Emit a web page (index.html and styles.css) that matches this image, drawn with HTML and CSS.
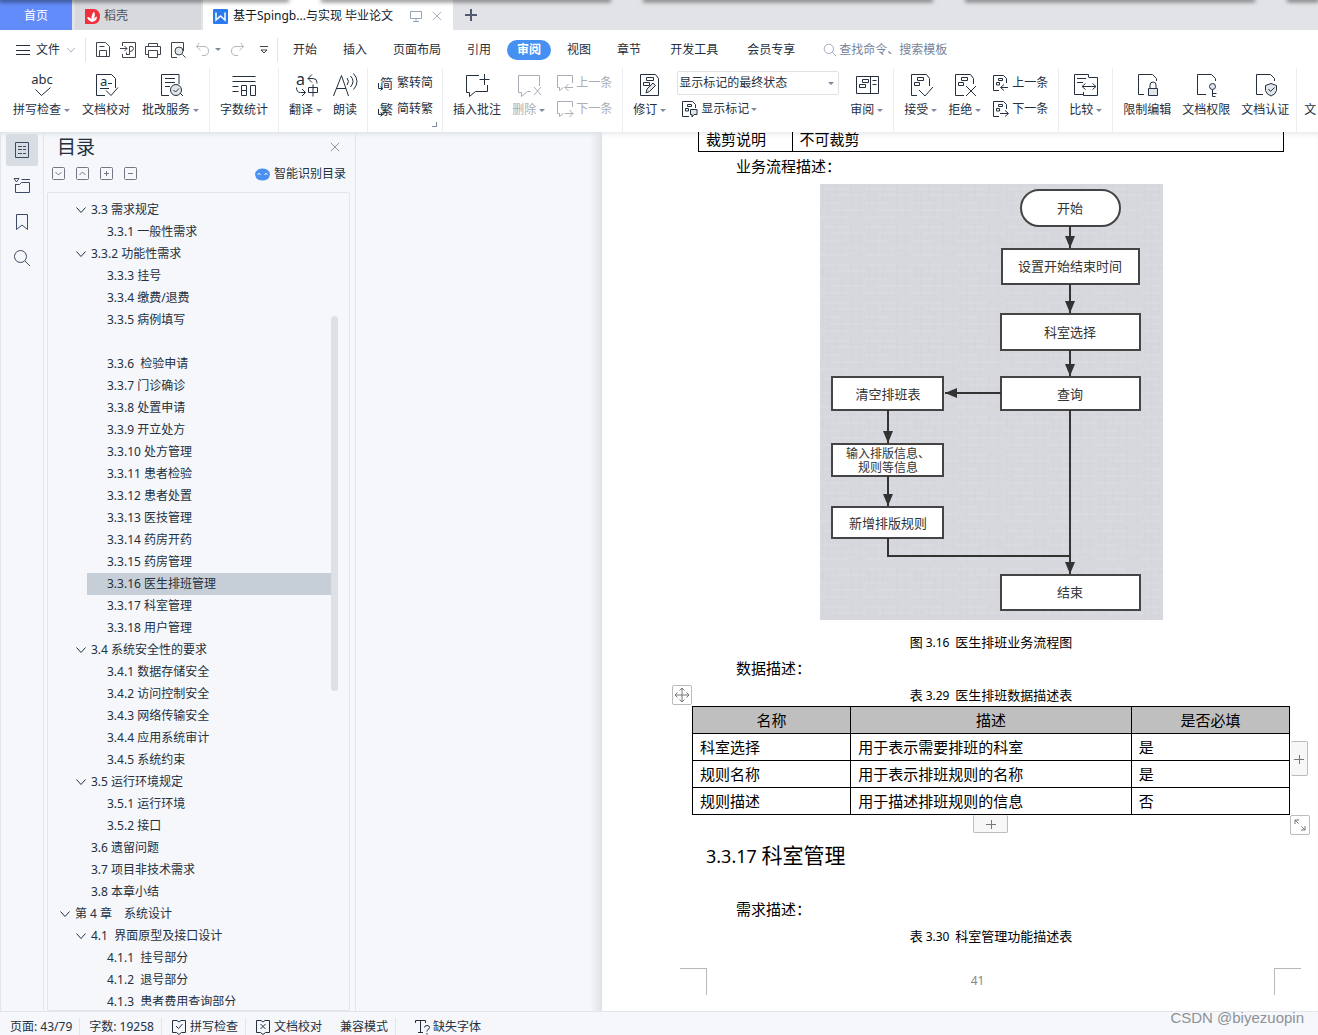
FILE: index.html
```html
<!DOCTYPE html>
<html lang="zh-CN">
<head>
<meta charset="utf-8">
<meta name="viewport" content="width=device-width, initial-scale=1">
<title>WPS 文字</title>
<link rel="stylesheet" href="styles.css">
</head>
<body>
<svg class="sprite" aria-hidden="true">
  <symbol id="chev" viewBox="0 0 12 12"><path d="M1.500 3.500L6 8.500l4.500-5"/></symbol>
  <symbol id="cross" viewBox="0 0 12 12"><path d="M1 1l10 10M11 1L1 11"/></symbol>
  <symbol id="review" viewBox="0 0 26 26"><path d="M11 23.500H3.500v-21h17.500V12M7 6.500h10M7 10.500h10M7 14.500h5M22 21l3 3"/><circle cx="18" cy="18" r="5.500" class="soft"/><path d="M15.500 18l2 2 3.500-3.500"/></symbol>
  <symbol id="count" viewBox="0 0 26 26"><path d="M1.500 4.500h23M1.500 9.500h23M1.500 14.500h6M1.500 19.500h6M10.500 13.500h5v10h-5zM10.500 18.500h5M19.500 13.500h5v10h-5z"/></symbol>
  <symbol id="read" viewBox="0 0 26 26"><path d="M1.500 24L9.500 3.500 16.500 24M4 16.500h10M15 6q3 3 0 7M18.500 4q5 5 0 11M21.500 1.500q7 8 0 16"/></symbol>
  <symbol id="comment" viewBox="0 0 26 26"><path d="M15 3.500H2.500v17h3v4l6-5h12V13M15.500 7.500h10M20.500 2v11"/></symbol>
  <symbol id="delcomment" viewBox="0 0 26 26"><path d="M23.500 14V3.500H2.500v17h3v4l6-5h3M18 15l7 8M25 15l-7 8"/></symbol>
  <symbol id="prevc" viewBox="0 0 18 18"><path d="M16.500 9V1.500H1.500v12h2v3l4-3M9 13.500h8M12.500 10L9 13.500l3.500 3.500"/></symbol>
  <symbol id="nextc" viewBox="0 0 18 18"><path d="M16.500 7V1.500H1.500v12h2v3l4-3M9 13.500h8M13.500 10l3.500 3.500-3.500 3.500"/></symbol>
  <symbol id="revise" viewBox="0 0 26 26"><path d="M3.500 2.500h15l3 4v17h-18zM9.500 5.500h7v3h-7zM6.500 10.500h6v3h-6z"/><path class="soft" d="M9 21l1-4 6-6 2.500 2.500-6 6z"/></symbol>
  <symbol id="pane" viewBox="0 0 26 26"><path d="M2.500 4.500h22v17h-22zM16.500 4.500v17M8.500 7.500h6v3h-6zM5.500 12.500h6v3h-6zM18.500 8.500h4M18.500 12.500h4"/></symbol>
  <symbol id="accept" viewBox="0 0 26 26"><path d="M9 23.500H3.500v-21h15l3 4V14M9.500 5.500h6v3h-6zM6.500 10.500h5v3h-5zM11 18l6 6 8-9"/></symbol>
  <symbol id="reject" viewBox="0 0 26 26"><path d="M12 23.500H3.500v-21h15l3 4V12M9.500 5.500h6v3h-6zM6.500 10.500h5v3h-5zM14 14l10 10M24 14L14 24"/></symbol>
  <symbol id="prevd" viewBox="0 0 18 18"><path d="M7 16.500H1.500v-15h10l3 3V9M6.500 4.500h4v2h-4zM4.500 8.500h3v2.500h-3zM9 13.500h7M12 10.500l-3.500 3 3.500 3"/></symbol>
  <symbol id="nextd" viewBox="0 0 18 18"><path d="M7 16.500H1.500v-15h10l3 3V9M6.500 4.500h4v2h-4zM4.500 8.500h3v2.500h-3zM8 13.500h8M13 10.500l3.500 3-3.500 3"/></symbol>
  <symbol id="mark" viewBox="0 0 18 18"><path d="M8 16.500H1.500v-15h10l3 3V8M6.500 4.500h4v2h-4zM4.500 8.500h3v2.500h-3z"/><path class="soft" d="M9.500 9.500h6.500v5h-3l-2 2.500v-2.500h-1.500z"/></symbol>
  <symbol id="compare" viewBox="0 0 26 26"><path d="M15.500 5V2.500H1.500v20h9M4 6.500h9M4 10.500h6M15.500 5.500h9v18h-14V20M9.500 14.500h13M12.500 11.500l-3.500 3 3.500 3M19.500 11.500l3.500 3-3.500 3"/></symbol>
  <symbol id="lock" viewBox="0 0 26 26"><path d="M10 22.500H4.500v-20h14l4 4V9"/><path d="M16 16v-3q0-3 3-3t3 3v3"/><path class="soft" d="M14.500 16.500h9v7h-9z"/></symbol>
  <symbol id="key" viewBox="0 0 26 26"><path d="M13 22.500H4.500v-20h14l4 4V9M19.500 17.500v7M19.500 21.500h4M19.500 24.500h3"/><circle class="soft" cx="19.500" cy="14.500" r="3"/></symbol>
  <symbol id="shield" viewBox="0 0 26 26"><path d="M11 22.500H4.500v-20h14l4 4V9"/><path class="soft" d="M19 11.500l5.500 2v5q-1 4-5.500 5.500-4.500-1.500-5.500-5.500v-5z"/><path d="M16.500 17l2 2.500 4-4"/></symbol>
  <symbol id="search" viewBox="0 0 18 18"><circle cx="7.500" cy="7.500" r="6"/><path d="M12 12l5 5"/></symbol>
  <symbol id="save" viewBox="0 0 18 18"><path d="M2.500 1.500h9l4 4v10h-13zM5.500 5.500h5M5.500 15.500v-6h7v6"/></symbol>
  <symbol id="pdf" viewBox="0 0 18 18"><path d="M3.500 5V1.500h13v15h-13V13M1 7.500h7M5.500 5L8 7.500 5.500 10M7.500 14V11.500M10.500 5.500q4-1 4 2t-4 3v3H8M10.500 5.500v5"/></symbol>
  <symbol id="print" viewBox="0 0 18 18"><path d="M4.500 5V2.500h9V5M4.500 13.500h-3v-8h15v8h-3M4.500 9.500h9v7h-9z"/></symbol>
  <symbol id="preview" viewBox="0 0 18 18"><path d="M8 16.500H2.500v-15h12V10M13.500 13.500l3 3"/><circle class="soft" cx="10" cy="10" r="4"/></symbol>
  <symbol id="undo" viewBox="0 0 18 18"><path d="M5.500 2L2.500 5.500l4 4M2.500 5.500H10q4.500 0 4.500 4.500T10 14.500H8"/></symbol>
  <symbol id="redo" viewBox="0 0 18 18"><path d="M12.500 2l3 3.500-4 4M15.500 5.500H8Q3.500 5.500 3.500 10T8 14.500h2"/></symbol>
</svg>

<header class="tabs">
  <div class="edge" aria-hidden="true"><i></i><i></i><i></i><i></i><i></i></div>
  <button class="tab home">首页</button>
  <button class="tab docer"><svg class="i15" viewBox="0 0 15 15"><path stroke="none" fill="#f0303c" d="M0 0h9q6 1 6 7.500T9 15H0z"/><path fill="#fff" stroke="none" d="M7 13Q3 12 2 8q3 0 4.500 2Q6 6 9 2.500 11 6 8.500 10q1-2 3.500-2.500Q12 12 7 13z"/></svg>稻壳</button>
  <button class="tab current"><svg class="i15" viewBox="0 0 15 15"><rect width="15" height="15" rx="1" fill="#2b7bf0" stroke="none"/><path stroke="#fff" stroke-width="1.500" d="M3 3.500v7.500l4.500-4 4.500 4V3.500"/></svg><span class="tabname">基于Spingb...与实现 毕业论文</span><svg class="i12 pale" viewBox="0 0 12 12"><path d="M.5 1.500h11v7H.5zM6 8.500v3M3 11.500h6"/></svg><svg class="i10 pale"><use href="#cross"/></svg></button>
  <button class="newtab" aria-label="新建"><svg class="i12" viewBox="0 0 12 12"><path stroke-width="2" d="M6 0v12M0 6h12"/></svg></button>
</header>

<nav class="menu">
  <button class="file"><svg class="i14" viewBox="0 0 14 14"><path d="M0 2.500h14M0 7.500h14M0 11.500h14"/></svg>文件<svg class="i10 pale"><use href="#chev"/></svg></button>
  <div class="quick">
    <button aria-label="保存"><svg class="i18"><use href="#save"/></svg></button>
    <button aria-label="输出PDF"><svg class="i18"><use href="#pdf"/></svg></button>
    <button aria-label="打印"><svg class="i18"><use href="#print"/></svg></button>
    <button aria-label="打印预览"><svg class="i18"><use href="#preview"/></svg></button>
    <button class="off" aria-label="撤销"><svg class="i18"><use href="#undo"/></svg><i class="caret"></i></button>
    <button class="off" aria-label="恢复"><svg class="i18"><use href="#redo"/></svg></button>
    <button class="more" aria-label="更多"><svg class="i10" viewBox="0 0 10 10"><path d="M1 1.500h8M2 5l3 3 3-3z"/></svg></button>
  </div>
  <div class="pages">
    <button>开始</button><button>插入</button><button>页面布局</button><button>引用</button><button class="on">审阅</button><button>视图</button><button>章节</button><button class="wide">开发工具</button><button class="wide">会员专享</button>
  </div>
  <label class="find"><svg class="i14" viewBox="0 0 18 18"><use href="#search"/></svg><input type="text" aria-label="搜索" placeholder="查找命令、搜索模板"></label>
</nav>

<section class="ribbon">
  <div class="group">
    <button class="big"><svg class="i28" viewBox="0 0 28 26"><text x="14" y="12" text-anchor="middle" class="glyph">abc</text><path d="M7.500 17.500l6 6 9-8"/></svg><span class="cap">拼写检查<i class="caret"></i></span></button>
    <button class="big"><svg class="i26" viewBox="0 0 26 26"><path d="M12 23.500H3.500v-21h15l4 4V16M13 18.500l5 5 7-8M7 16.500h9M15 11.500h4"/><text x="7" y="14" class="glyph">a</text></svg><span class="cap">文档校对</span></button>
    <button class="big"><svg class="i26"><use href="#review"/></svg><span class="cap">批改服务<i class="caret"></i></span></button>
  </div>
  <div class="group">
    <button class="big"><svg class="i26"><use href="#count"/></svg><span class="cap">字数统计</span></button>
  </div>
  <div class="group">
    <button class="big"><svg class="i26" viewBox="0 0 26 26"><text x="3" y="13" class="glyph large">a</text><path d="M19 2.500l-4 4 4 4M15 6.500h5q4 0 4 4v1M3.500 15.500q0 5 4 5h5M9 17l3.500 3.500L9 24M15.500 15.500h9v5h-9zM20 12.500v12"/></svg><span class="cap">翻译<i class="caret"></i></span></button>
    <button class="big"><svg class="i26"><use href="#read"/></svg><span class="cap">朗读</span></button>
  </div>
  <div class="group corner">
    <div class="stack">
      <button class="small"><svg class="i18" viewBox="0 0 18 18"><text x="3" y="14" class="glyph">简</text><path d="M1.500 9v5.500h4M3.500 12.500l2 2-2 2"/></svg>繁转简</button>
      <button class="small"><svg class="i18" viewBox="0 0 18 18"><text x="3" y="14" class="glyph">繁</text><path d="M1.500 9v5.500h4M3.500 12.500l2 2-2 2"/></svg>简转繁</button>
    </div>
  </div>
  <div class="group">
    <button class="big"><svg class="i26"><use href="#comment"/></svg><span class="cap">插入批注</span></button>
    <button class="big off"><svg class="i26"><use href="#delcomment"/></svg><span class="cap">删除<i class="caret"></i></span></button>
    <div class="stack">
      <button class="small off"><svg class="i18"><use href="#prevc"/></svg>上一条</button>
      <button class="small off"><svg class="i18"><use href="#nextc"/></svg>下一条</button>
    </div>
  </div>
  <div class="group">
    <button class="big"><svg class="i26"><use href="#revise"/></svg><span class="cap">修订<i class="caret"></i></span></button>
    <div class="stack">
      <div class="pick"><select aria-label="显示状态"><option>显示标记的最终状态</option></select><i class="caret"></i></div>
      <button class="small marks"><svg class="i18"><use href="#mark"/></svg>显示标记<i class="caret"></i></button>
    </div>
    <button class="big"><svg class="i26"><use href="#pane"/></svg><span class="cap">审阅<i class="caret"></i></span></button>
  </div>
  <div class="group">
    <button class="big"><svg class="i26"><use href="#accept"/></svg><span class="cap">接受<i class="caret"></i></span></button>
    <button class="big"><svg class="i26"><use href="#reject"/></svg><span class="cap">拒绝<i class="caret"></i></span></button>
    <div class="stack">
      <button class="small"><svg class="i18"><use href="#prevd"/></svg>上一条</button>
      <button class="small"><svg class="i18"><use href="#nextd"/></svg>下一条</button>
    </div>
  </div>
  <div class="group">
    <button class="big"><svg class="i26"><use href="#compare"/></svg><span class="cap">比较<i class="caret"></i></span></button>
  </div>
  <div class="group last">
    <button class="big"><svg class="i26"><use href="#lock"/></svg><span class="cap">限制编辑</span></button>
    <button class="big"><svg class="i26"><use href="#key"/></svg><span class="cap">文档权限</span></button>
    <button class="big"><svg class="i26"><use href="#shield"/></svg><span class="cap">文档认证</span></button>
  </div>
  <button class="big clipped"><span class="cap">文</span></button>
</section>

<div class="work">
  <aside class="rail">
    <button class="on" aria-label="目录"><svg class="i18" viewBox="0 0 18 18"><path d="M2.500 1.500h13v15h-13zM5 5.500h4M5 8.500h4M5 12.500h4M10 5.500h3M10 8.500h3M10 12.500h3"/></svg></button>
    <button aria-label="章节"><svg class="i18" viewBox="0 0 18 18"><path d="M1 1.500h5L3.500 5zM8.500 2.500H17M2.500 7v8.500h14v-10h-8l-2 2h-4"/></svg></button>
    <button aria-label="书签"><svg class="i18" viewBox="0 0 18 18"><path d="M3.500 1.500h11v15L9 12l-5.500 4.500z"/></svg></button>
    <button aria-label="查找"><svg class="i18"><use href="#search"/></svg></button>
  </aside>
  <aside class="panel">
    <div class="head"><h1>目录</h1><button aria-label="关闭"><svg class="i10"><use href="#cross"/></svg></button></div>
    <div class="tools">
      <button class="box" aria-label="展开"><svg class="i14" viewBox="0 0 14 14"><rect x=".5" y=".5" width="12" height="12" rx="1"/><path d="M3.500 5l3 3 3-3"/></svg></button>
      <button class="box" aria-label="收起"><svg class="i14" viewBox="0 0 14 14"><rect x=".5" y=".5" width="12" height="12" rx="1"/><path d="M3.500 8l3-3 3 3"/></svg></button>
      <button class="box" aria-label="增加级别"><svg class="i14" viewBox="0 0 14 14"><rect x=".5" y=".5" width="12" height="12" rx="1"/><path d="M4 6.500h5M6.500 4v5"/></svg></button>
      <button class="box" aria-label="减少级别"><svg class="i14" viewBox="0 0 14 14"><rect x=".5" y=".5" width="12" height="12" rx="1"/><path d="M4 6.500h5"/></svg></button>
      <button class="smart"><svg class="i15" viewBox="0 0 15 15"><path fill="#4a90f0" stroke="none" d="M3 2.500q4.500-2 9 0 2.500 1.500 3 5-.5 3.500-3 5-4.500 2-9 0-2.500-1.500-3-5 .5-3.500 3-5z"/><path stroke="#fff" d="M2.500 7.500q1.500-2 3 0M9.500 7.500q1.500-2 3 0"/></svg>智能识别目录</button>
    </div>
    <div class="tree">
      <ul>
        <li><a class="l2 open" href="#"><svg class="i12"><use href="#chev"/></svg>3.3 需求规定</a></li>
        <li><a class="l3" href="#">3.3.1 一般性需求</a></li>
        <li><a class="l2 open" href="#"><svg class="i12"><use href="#chev"/></svg>3.3.2 功能性需求</a></li>
        <li><a class="l3" href="#">3.3.3 挂号</a></li>
        <li><a class="l3" href="#">3.3.4 缴费/退费</a></li>
        <li><a class="l3" href="#">3.3.5 病例填写</a></li>
        <li class="blank"></li>
        <li><a class="l3" href="#">3.3.6&nbsp; 检验申请</a></li>
        <li><a class="l3" href="#">3.3.7 门诊确诊</a></li>
        <li><a class="l3" href="#">3.3.8 处置申请</a></li>
        <li><a class="l3" href="#">3.3.9 开立处方</a></li>
        <li><a class="l3" href="#">3.3.10 处方管理</a></li>
        <li><a class="l3" href="#">3.3.11 患者检验</a></li>
        <li><a class="l3" href="#">3.3.12 患者处置</a></li>
        <li><a class="l3" href="#">3.3.13 医技管理</a></li>
        <li><a class="l3" href="#">3.3.14 药房开药</a></li>
        <li><a class="l3" href="#">3.3.15 药房管理</a></li>
        <li><a class="l3 sel" href="#">3.3.16 医生排班管理</a></li>
        <li><a class="l3" href="#">3.3.17 科室管理</a></li>
        <li><a class="l3" href="#">3.3.18 用户管理</a></li>
        <li><a class="l2 open" href="#"><svg class="i12"><use href="#chev"/></svg>3.4 系统安全性的要求</a></li>
        <li><a class="l3" href="#">3.4.1 数据存储安全</a></li>
        <li><a class="l3" href="#">3.4.2 访问控制安全</a></li>
        <li><a class="l3" href="#">3.4.3 网络传输安全</a></li>
        <li><a class="l3" href="#">3.4.4 应用系统审计</a></li>
        <li><a class="l3" href="#">3.4.5 系统约束</a></li>
        <li><a class="l2 open" href="#"><svg class="i12"><use href="#chev"/></svg>3.5 运行环境规定</a></li>
        <li><a class="l3" href="#">3.5.1 运行环境</a></li>
        <li><a class="l3" href="#">3.5.2 接口</a></li>
        <li><a class="l2" href="#">3.6 遗留问题</a></li>
        <li><a class="l2" href="#">3.7 项目非技术需求</a></li>
        <li><a class="l2" href="#">3.8 本章小结</a></li>
        <li><a class="l1 open" href="#"><svg class="i12"><use href="#chev"/></svg>第 4 章　系统设计</a></li>
        <li><a class="l2 open" href="#"><svg class="i12"><use href="#chev"/></svg>4.1&nbsp; 界面原型及接口设计</a></li>
        <li><a class="l3" href="#">4.1.1&nbsp; 挂号部分</a></li>
        <li><a class="l3" href="#">4.1.2&nbsp; 退号部分</a></li>
        <li><a class="l3" href="#">4.1.3&nbsp; 患者费用查询部分</a></li>
      </ul>
      <i class="thumb"></i>
    </div>
  </aside>
  <div class="desk"></div>
  <main class="paper">
    <table class="grid cut"><tbody><tr><td>裁剪说明</td><td>不可裁剪</td></tr></tbody></table>
    <p class="lead first">业务流程描述：</p>
    <figure>
      <svg class="flow" viewBox="0 0 343 436" role="img" aria-label="医生排班业务流程图">
        <defs>
          <pattern id="weave" width="46" height="38" patternUnits="userSpaceOnUse">
            <path d="M3 0v24M9 8v30M17 0v16M22 12v26M31 0v30M40 6v30" stroke="#cfd0d5" stroke-width="1" opacity=".5"/>
            <path d="M0 5h30M12 11h34M0 19h22M8 26h38M0 33h28" stroke="#e0e1e5" stroke-width="1" opacity=".5"/>
          </pattern>
          <marker id="tip" markerUnits="userSpaceOnUse" markerWidth="14" markerHeight="12" refX="12" refY="5" orient="auto"><path d="M0 0L12 5 0 10z" fill="#333" stroke="none"/></marker>
        </defs>
        <rect width="343" height="436" fill="#d7d8dd" stroke="none"/>
        <rect width="343" height="436" fill="url(#weave)" stroke="none"/>
        <g class="shape">
          <rect x="201" y="6" width="99" height="36" rx="18"/>
          <rect x="182" y="65" width="137" height="35"/>
          <rect x="181" y="130" width="139" height="36"/>
          <rect x="181" y="193" width="139" height="33"/>
          <rect x="12" y="193" width="111" height="33"/>
          <rect x="12" y="260" width="111" height="32"/>
          <rect x="12" y="323" width="111" height="31"/>
          <rect x="181" y="391" width="139" height="35"/>
        </g>
        <g class="wire">
          <path d="M250 42v22"/><path d="M250 100v29"/><path d="M250 166v26"/><path d="M250 226v164"/>
          <path d="M181 209h-56"/><path d="M68 226v33"/><path d="M68 292v30"/>
        </g>
        <path class="join" d="M68 354v18h182"/>
        <g class="words">
          <text x="250" y="29">开始</text>
          <text x="250" y="87">设置开始结束时间</text>
          <text x="250" y="153">科室选择</text>
          <text x="250" y="215">查询</text>
          <text x="68" y="215">清空排班表</text>
          <text x="68" y="274" class="tight">输入排版信息、</text>
          <text x="68" y="288" class="tight">规则等信息</text>
          <text x="68" y="344">新增排版规则</text>
          <text x="250" y="413">结束</text>
        </g>
      </svg>
      <figcaption>图 <span>3.16</span>&nbsp; 医生排班业务流程图</figcaption>
    </figure>
    <p class="lead">数据描述：</p>
    <div class="tablebox">
      <table class="grid data">
        <caption>表 <span>3.29</span>&nbsp; 医生排班数据描述表</caption>
        <thead><tr><th>名称</th><th>描述</th><th>是否必填</th></tr></thead>
        <tbody>
          <tr><td>科室选择</td><td>用于表示需要排班的科室</td><td>是</td></tr>
          <tr><td>规则名称</td><td>用于表示排班规则的名称</td><td>是</td></tr>
          <tr><td>规则描述</td><td>用于描述排班规则的信息</td><td>否</td></tr>
        </tbody>
      </table>
      <button class="grip move" aria-label="移动表格"><svg class="i16" viewBox="0 0 16 16"><path d="M8 1v14M1 8h14M5.500 3.500L8 1l2.500 2.500M5.500 12.500L8 15l2.500-2.500M3.500 5.500L1 8l2.500 2.500M12.500 5.500L15 8l-2.500 2.500"/></svg></button>
      <button class="grip addcol" aria-label="添加列"><svg class="i10" viewBox="0 0 10 10"><path d="M0 5.500h10M5.500 1v9"/></svg></button>
      <button class="grip addrow" aria-label="添加行"><svg class="i10" viewBox="0 0 10 10"><path d="M0 5.500h10M5.500 1v9"/></svg></button>
      <button class="grip size" aria-label="调整大小"><svg class="i14" viewBox="0 0 14 14"><path d="M2 6V2h4M2 2l3.500 3.500M12 8v4H8M12 12L8.500 8.500"/></svg></button>
    </div>
    <h2><span>3.3.17</span> 科室管理</h2>
    <p class="lead need">需求描述：</p>
    <p class="note">表 <span>3.30</span>&nbsp; 科室管理功能描述表</p>
    <footer class="foot"><i class="mark left"></i><span>41</span><i class="mark right"></i></footer>
  </main>
</div>

<footer class="status">
  <span class="rule">页面: 43/79</span>
  <span class="rule">字数: 19258</span>
  <button class="rule"><svg class="i16" viewBox="0 0 16 16"><path d="M6 1.500H1.500v12h4l2.500 2 2.500-2h4v-12H10L8 3 6 1.500M5 7l2.500 2.500L11.500 5"/></svg>拼写检查</button>
  <button class="plain"><svg class="i16" viewBox="0 0 16 16"><path d="M6 1.500H1.500v12h4l2.500 2 2.500-2h4v-12H10L8 3 6 1.500M5.500 5l5 5M10.500 5l-5 5"/></svg>文档校对</button>
  <span class="rule mode">兼容模式</span>
  <button class="fonts"><svg class="i16" viewBox="0 0 16 16"><path d="M1.500 4V1.500h10V4M6.500 1.500v12M4 13.500h5M10.500 8.500q0-2 2.500-2t2.500 2q0 1.500-2.500 3v1M13 14v1.500"/></svg>缺失字体</button>
  <span class="csdn">CSDN @biyezuopin</span>
</footer>
</body>
</html>
```
FILE: styles.css
```css
* { box-sizing: border-box; }

body {
  margin: 0;
  height: 100vh;
  display: flex;
  flex-direction: column;
  overflow: hidden;
  background: #f5f7fa;
  color: #24303f;
  font: 12px/20px "Noto Sans", "Noto Sans CJK SC", sans-serif;
}

button, input, select {
  font: inherit;
  color: inherit;
  border: 0;
  padding: 0;
  margin: 0;
  background: none;
  white-space: nowrap;
}

button { display: flex; align-items: center; }
i { font-style: normal; }
.sprite { position: absolute; width: 0; height: 0; }

svg {
  flex: none;
  display: block;
  fill: none;
  stroke: currentColor;
  stroke-width: 1;
}

.soft { fill: #e2e5ea; }
.glyph { font: 13px "Noto Sans", "Noto Sans CJK SC", sans-serif; fill: currentColor; stroke: none; }
.glyph.large { font-size: 16px; }

.i10 { width: 10px; height: 10px; }
.i12 { width: 12px; height: 12px; }
.i14 { width: 14px; height: 14px; }
.i15 { width: 15px; height: 15px; }
.i16 { width: 16px; height: 16px; }
.i18 { width: 18px; height: 18px; }
.i26 { width: 26px; height: 26px; }
.i28 { width: 28px; height: 26px; }
.pale { color: #98a3b8; }
.off { color: #a9adb5; }

.caret {
  width: 0;
  height: 0;
  border: 3px solid transparent;
  border-top: 3px solid #7f8ba0;
  border-bottom: 0;
}

/* window tabs */
.tabs {
  position: relative;
  flex: none;
  display: flex;
  height: 30px;
  background: #e2e3e7;
}

.edge {
  position: absolute;
  left: 0;
  right: 0;
  top: -2px;
  display: flex;
  gap: 34px;
}

.edge i { flex: 287; height: 2px; box-shadow: 0 1px 4px 1px rgba(0, 0, 0, .5); }
.edge i:last-child { flex: 30; }
.tab { height: 30px; padding-top: 2px; }
.home { width: 72px; justify-content: center; background: #628cf9; color: #fff; }
.docer { width: 126px; margin-left: 3px; padding-left: 10px; gap: 4px; background: #d7d9dd; color: #4a505c; }
.current { width: 250px; margin-left: 2px; padding-left: 10px; gap: 5px; background: #fff; color: #101828; }
.tabname { flex: 1; text-align: left; }
.current .i12 { margin-right: 5px; }
.current .i10 { margin-right: 11px; }
.newtab { margin-left: 12px; color: #505b70; }

/* menu */
.menu {
  flex: none;
  display: flex;
  align-items: center;
  height: 38px;
  padding-top: 1px;
  background: #fff;
}

.file { margin-left: 16px; padding-right: 9px; gap: 6px; height: 24px; border-right: 1px solid #e2e4e8; }
.quick { display: flex; align-items: center; gap: 7px; height: 24px; padding: 0 8px; border-right: 1px solid #e2e4e8; color: #3e434c; }
.quick .off { gap: 3px; color: #b3b8c0; }
.quick .more { margin: 0 0 0 6px; }
.pages { display: flex; margin-left: 2px; }
.pages button { height: 20px; padding: 0 13px; }
.pages .on { margin: 0 3px; padding: 0 10px; border-radius: 10px; background: #4590f2; color: #fff; font-weight: bold; }
.pages .wide { padding: 0 13px 0 16px; }
.find { display: flex; align-items: center; gap: 2px; margin-left: 15px; color: #8793ab; }
.find input { width: 120px; }
.find input::placeholder { color: #77829a; opacity: 1; }

/* ribbon */
.ribbon {
  position: relative;
  z-index: 1;
  flex: none;
  display: flex;
  height: 64px;
  background: #fff;
  overflow: hidden;
}

.group {
  display: flex;
  flex: none;
  gap: 11px;
  padding: 0 10px;
  border-right: 1px solid #eceef1;
}

.group:first-child { padding-left: 13px; gap: 12px; }
.group.last { padding-right: 7px; }
.big { flex: none; flex-direction: column; align-items: center; padding-top: 4px; }
.big svg { margin: 0 -1px 2px; }
.cap { display: flex; align-items: center; gap: 3px; }
.clipped { margin-left: 7px; padding-top: 32px; }
.stack { display: flex; flex-direction: column; gap: 2px; padding-top: 3px; }
.small { height: 24px; gap: 2px; }
.corner {
  padding: 0 9px;
  background:
    linear-gradient(#7f8ba0, #7f8ba0) 64px 58px / 5px 1px no-repeat,
    linear-gradient(#7f8ba0, #7f8ba0) 68px 54px / 1px 5px no-repeat;
}
.marks { padding-left: 4px; }

.pick {
  display: flex;
  align-items: center;
  width: 162px;
  height: 24px;
  padding-right: 4px;
  border: 1px solid #dfe1e5;
  border-radius: 2px;
}

.pick select { flex: 1; appearance: none; padding-left: 1px; }

/* work area */
.work { flex: 1; min-height: 0; display: flex; box-shadow: inset 0 4px 4px -2px #dfe1e5; }

.rail {
  flex: none;
  display: flex;
  flex-direction: column;
  gap: 4px;
  width: 44px;
  padding: 2px 5px;
  border: solid #e2e5ea;
  border-width: 0 1px;
}

.rail button { justify-content: center; width: 32px; height: 32px; border-radius: 2px; color: #3c4a66; }
.rail .on { background: #d8dde4; }

.panel { flex: none; display: flex; flex-direction: column; width: 312px; border-right: 1px solid #e2e5ea; }
.head { display: flex; justify-content: space-between; align-items: center; height: 30px; padding: 0 15px 0 13px; }
.head button { color: #7b8494; }
h1 { margin: 0; font-size: 19px; font-weight: normal; line-height: 28px; }
.tools { display: flex; align-items: center; height: 24px; gap: 10px; padding: 0 9px 0 8px; }
.box { color: #717782; }
.smart { margin-left: auto; gap: 4px; }

.tree {
  position: relative;
  flex: 1;
  min-height: 0;
  margin: 6px 5px 0 3px;
  padding: 6px 0 4px;
  border: 1px solid #e2e5ea;
  border-radius: 2px;
}

.tree ul { height: 100%; margin: 0; padding: 0; list-style: none; overflow: hidden; }
.tree li { height: 22px; }
.tree a { display: flex; align-items: center; gap: 4px; height: 22px; color: inherit; text-decoration: none; white-space: pre; }
.l1 { padding-left: 27px; }
.l2 { padding-left: 43px; }
.l1.open { padding-left: 11px; }
.l2.open { padding-left: 27px; }
.l3 { margin-left: 39px; padding-left: 20px; }
.sel { margin-right: 18px; background: #c6cfd7; }
.thumb { position: absolute; right: 11px; top: 15%; width: 7px; height: 46%; border-radius: 4px; background: #dde0e4; }

.desk { flex: none; width: 246px; background: linear-gradient(to left, #dfe2e6, transparent 12px); }

/* document page */
.paper {
  flex: 1;
  min-width: 0;
  display: flex;
  flex-direction: column;
  background: #fff;
  box-shadow: inset 0 4px 4px -2px #e6e8eb;
  color: #000;
  font: 15px/26px "Noto Sans CJK SC", sans-serif;
  overflow: hidden;
}

.paper > p, .paper > figure, .paper > h2 { margin: 0 34px 0 96px; }
.paper > .lead { padding-left: 38px; }
.paper > .first { padding-top: 1px; padding-bottom: 5px; }

.grid { border-collapse: collapse; table-layout: fixed; }
.grid th, .grid td { height: 27px; padding: 0 7px; border: 1px solid #000; text-align: left; line-height: 24px; font-weight: normal; }
.grid.cut { margin: 0 34px 0 96px; width: calc(100% - 130px); }
.grid.cut td { height: 19px; padding: 0 7px 5px; line-height: 14px; border-top: 0; }
.cut td:first-child { width: 16%; }

figcaption, caption, .note { font-size: 13px; line-height: 20px; text-align: center; white-space: pre; }
figcaption span, caption span, .note span, .foot span { font-family: "Noto Sans", sans-serif; font-size: 12px; }
.flow { width: 343px; height: 436px; margin: 0 auto; }
figcaption { padding: 12px 0 2px; }
.shape rect { fill: #fff; stroke: #444; stroke-width: 2; }
.wire { stroke: #333; stroke-width: 2; }
.wire path { marker-end: url(#tip); }
.join { stroke: #333; stroke-width: 2; }
.words { fill: #333; stroke: none; text-anchor: middle; font-size: 13px; }
.tight { font-size: 12px; }

.tablebox { position: relative; margin: 4px 28px 0 90px; }
.data { width: 100%; }
.grid.data th { background: #bfbfbf; text-align: center; }
.data th:nth-child(2) { width: 47%; }

.grip { position: absolute; justify-content: center; border: 1px solid #b9bcc0; border-radius: 2px; background: #fff; color: #777; }
.move { left: -20px; top: 0; width: 20px; height: 20px; }
.addcol { right: -18px; top: 56px; width: 17px; height: 35px; border-left: 0; background: #f7f7f7; }
.addrow { left: 47%; bottom: -18px; width: 35px; height: 18px; border-top: 0; background: #f7f7f7; }
.size { right: -20px; bottom: -20px; width: 20px; height: 20px; }

.paper > h2 { margin-top: 24px; padding-left: 8px; font-size: 21px; font-weight: normal; line-height: 30px; }
h2 span { font-family: "Noto Sans", sans-serif; font-size: 18px; }
.paper > .need { margin-top: 25px; }
.paper > .note { margin-top: 4px; }

.foot { display: flex; justify-content: space-between; margin: 21px 17px 0 78px; line-height: 26px; color: #888; }
.foot span { margin-right: 26px; }
.mark { width: 27px; height: 27px; border-top: 1px solid #b8b8b8; }
.mark.left { border-right: 1px solid #b8b8b8; }
.mark.right { border-left: 1px solid #b8b8b8; }

/* status bar */
.status {
  position: relative;
  flex: none;
  display: flex;
  align-items: center;
  height: 24px;
  padding: 6px 0 0 10px;
  border-top: 1px solid #e2e5ea;
}

.status > * { height: 18px; line-height: 18px; }
.status .rule { padding-right: 7px; margin-right: 9px; border-right: 1px solid #e2e5ea; }
.status button { gap: 3px; }
.status .plain { margin-right: 18px; }
.status .mode { margin-right: 18px; }
.status .csdn { position: absolute; right: 14px; top: -4px; color: #8e9196; font: 15px/20px "Liberation Sans", sans-serif; }
```
